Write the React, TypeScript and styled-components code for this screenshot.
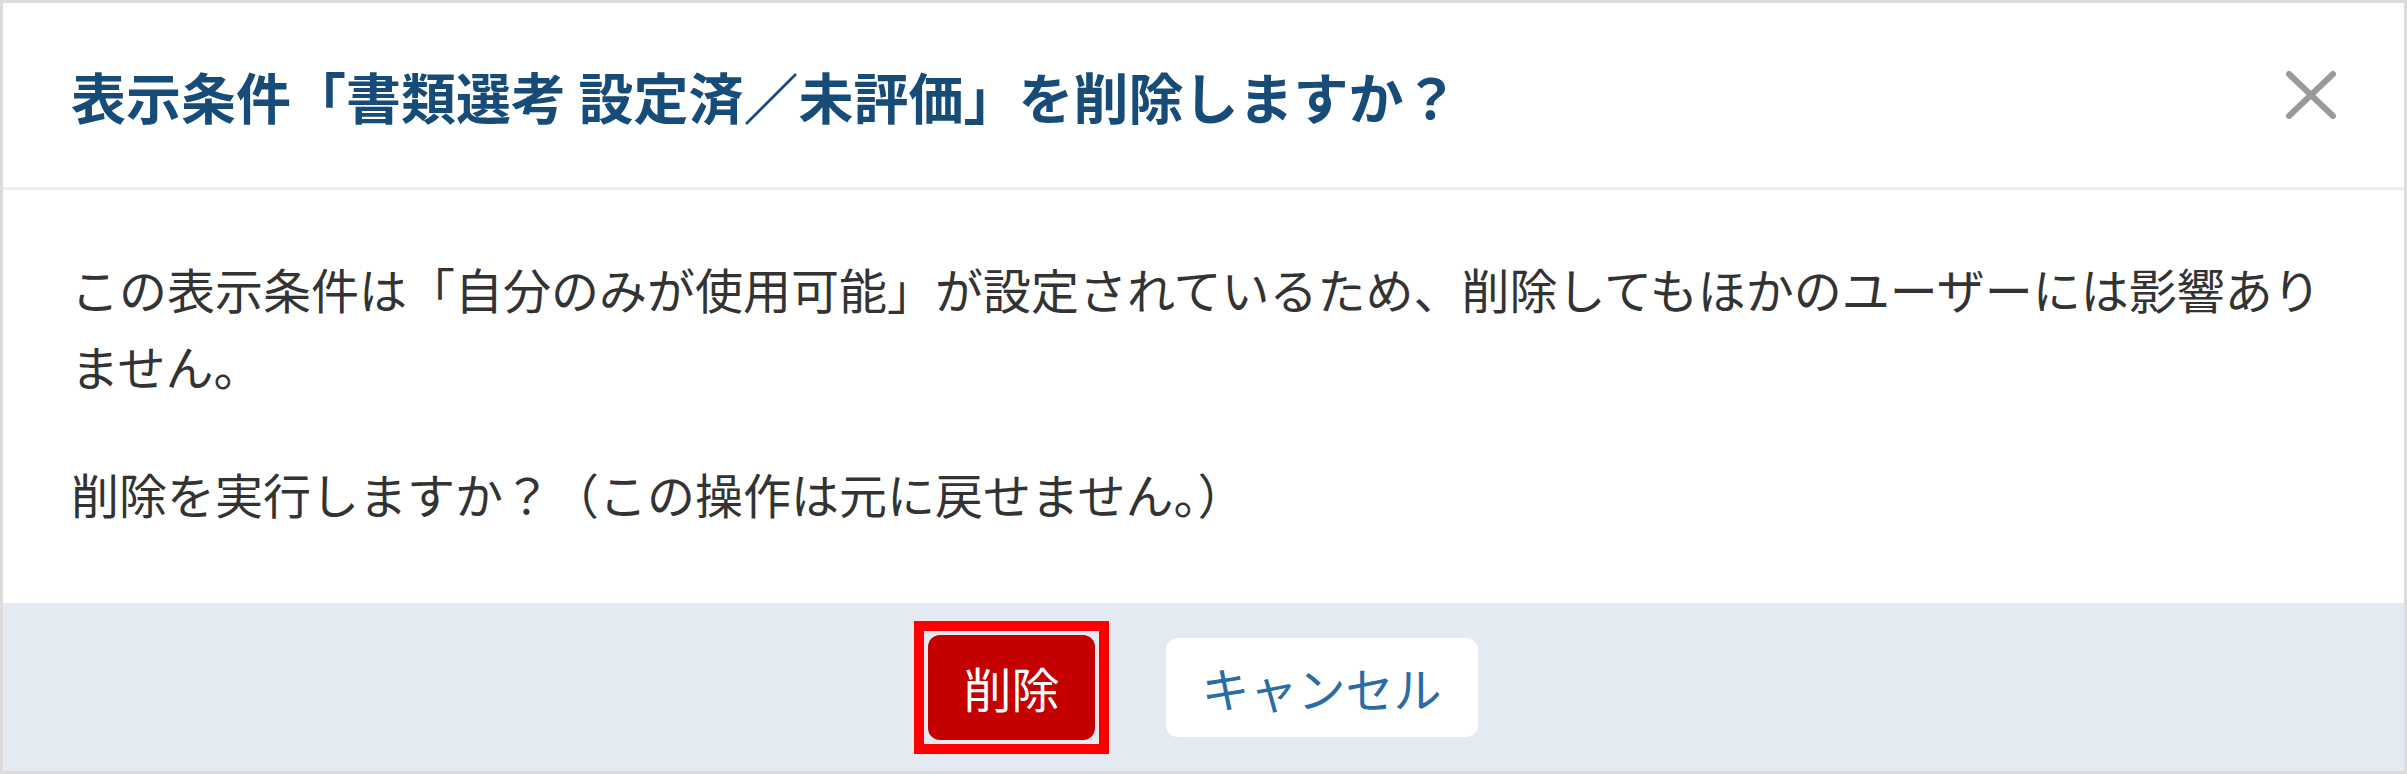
import React from "react";
import styled, { createGlobalStyle } from "styled-components";

const GlobalStyle = createGlobalStyle`
  html, body {
    margin: 0;
    padding: 0;
    background: #fff;
  }
  body {
    font-family: "Noto Sans CJK JP", "Noto Sans", sans-serif;
  }
`;

const App = () => {
  return (
    <>
      <GlobalStyle />
      <Modal>
        <Header>
          <Title>表示条件「書類選考 設定済／未評価」を削除しますか？</Title>
          <CloseButton aria-label="閉じる">
            <svg width="50" height="48" viewBox="0 0 50 48">
              <path
                d="M3 3 L47 45 M47 3 L3 45"
                stroke="#999"
                strokeWidth="6"
                strokeLinecap="round"
              />
            </svg>
          </CloseButton>
        </Header>
        <Body>
          <Paragraph>
            この表示条件は「自分のみが使用可能」が設定されているため、削除してもほかのユーザーには影響ありません。
          </Paragraph>
          <Paragraph>削除を実行しますか？（この操作は元に戻せません。）</Paragraph>
        </Body>
        <Footer>
          <Highlight>
            <Button $variant="danger">削除</Button>
          </Highlight>
          <Button $variant="plain">キャンセル</Button>
        </Footer>
      </Modal>
    </>
  );
};

export default App;

const Modal = styled.div`
  box-sizing: border-box;
  width: 2407px;
  height: 774px;
  display: flex;
  flex-direction: column;
  border: 3px solid #dcdcdc;
  background: #fff;
`;

const Header = styled.div`
  display: flex;
  align-items: center;
  justify-content: space-between;
  height: 184px;
  padding: 0 68px;
  border-bottom: 3px solid #eeeeee;
`;

const Title = styled.h1`
  margin: 0;
  font-size: 55px;
  line-height: 1.5;
  font-weight: 700;
  color: #174c78;
`;

const CloseButton = styled.button`
  display: flex;
  align-items: center;
  justify-content: center;
  padding: 0;
  border: none;
  background: none;
  cursor: pointer;
`;

const Body = styled.div`
  flex: 1;
  padding: 60px 68px 0;
`;

const Paragraph = styled.p`
  margin: 0 0 51px;
  font-size: 48px;
  line-height: 77px;
  color: #333;
`;

const Footer = styled.div`
  display: flex;
  align-items: center;
  justify-content: center;
  gap: 57px;
  height: 168px;
  padding-right: 15px;
  background: #e3eaf1;
`;

const Highlight = styled.span`
  display: flex;
  padding: 4px;
  border: 10px solid #ff0000;
`;

const Button = styled.button<{ $variant: "danger" | "plain" }>`
  font-family: "Noto Sans CJK JP", "Noto Sans", sans-serif;
  font-size: 48px;
  line-height: 1;
  padding: 0 ${({ $variant }) => ($variant === "danger" ? "35px" : "36px")};
  border: none;
  border-radius: 12px;
  cursor: pointer;
  height: ${({ $variant }) => ($variant === "danger" ? "105px" : "99px")};
  background: ${({ $variant }) => ($variant === "danger" ? "#c40000" : "#fff")};
  color: ${({ $variant }) => ($variant === "danger" ? "#fff" : "#2a6ca5")};
`;
